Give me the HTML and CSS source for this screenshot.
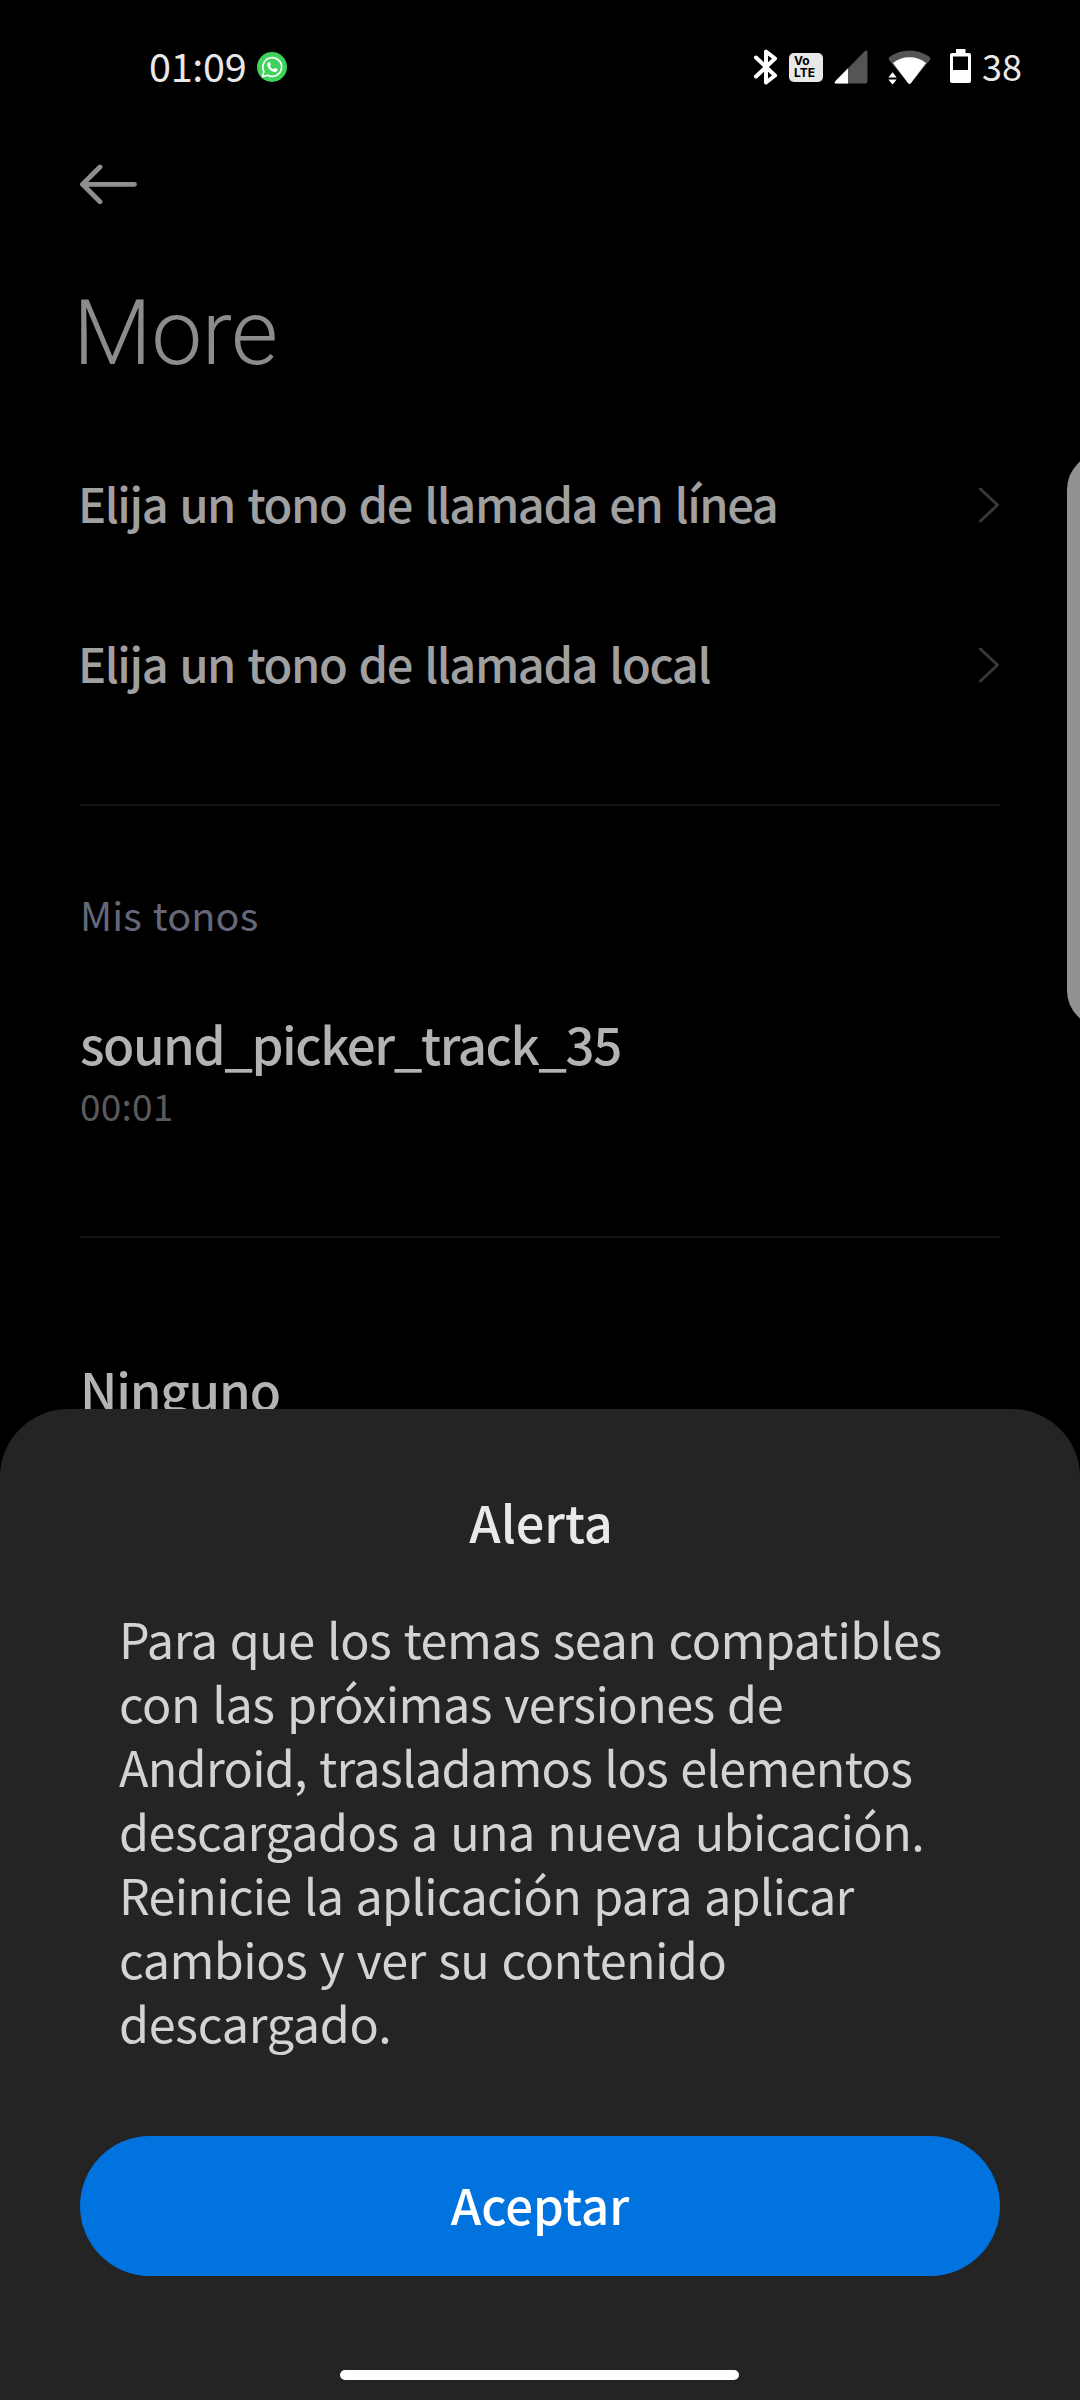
FILE: index.html
```
<!DOCTYPE html>
<html lang="es">
<head>
<meta charset="utf-8">
<title>More</title>
<link rel="stylesheet" href="styles.css">
</head>
<body>
<div class="screen">
  <header class="status">
    <div class="status-left">
      <span class="time">01:09</span>
      <svg class="whatsapp" width="30" height="30" viewBox="0 0 30 30">
        <circle cx="15" cy="15" r="15" fill="#3fd35c"/>
        <path d="M5.500 24.600l1.400-5.200A9.400 9.400 0 1 1 10.600 23.200z" fill="none" stroke="#fff" stroke-width="1.700" stroke-linejoin="round"/>
        <path d="M11.300 10.200c.6-.6 1.300-.5 1.600.1l.9 2c.2.5-.6 1.200-.9 1.600.8 1.600 2 2.700 3.700 3.400.5-.5 1-1.400 1.500-1.200l2.100 1c.5.3.4 1.200 0 1.700-1 1.200-2.600 1.500-4.200.8-2.800-1.100-4.900-3.300-5.600-5.900-.3-1.500.1-2.700.9-3.500z" fill="#fff"/>
      </svg>
    </div>
    <div class="status-right">
      <svg class="bluetooth" width="26" height="38" viewBox="0 0 26 38">
        <path d="M3 9.500L22 27.500L13 34.500V3.500L22 10.500L3 28.500" fill="none" stroke="#fff" stroke-width="4" stroke-linejoin="round" stroke-linecap="round"/>
      </svg>
      <span class="volte"><span class="volte-vo">Vo</span><span class="volte-lte">LTE</span></span>
      <svg class="signal" width="34" height="34" viewBox="0 0 34 34">
        <path d="M1.500 31L30.500 1.500Q33.500 -.5 33.500 2V31.500Q33.500 33.500 31.500 33.500H2Q-.5 33.500 1.500 31z" fill="#555"/>
        <path d="M1.500 31L14 18.300V33.500H2Q-.5 33.500 1.500 31z" fill="#fff"/>
      </svg>
      <svg class="wifi" width="43" height="35" viewBox="0 0 43 35">
        <path d="M1.500 10.500Q-.5 8 2 6.500Q11 .5 21.500 .5T41 6.500Q43.500 8 41.500 10.500L22.800 33.300Q21.500 34.800 20.200 33.300z" fill="#555"/>
        <path d="M5 13Q12 7.300 21.500 7.300T38 13L22.800 33.300Q21.500 34.800 20.200 33.300z" fill="#fff"/>
        <path d="M0 21.500H9V35H0z" fill="#000"/>
        <path d="M4.500 22.300L8.700 27.500H.3zM4.500 34.500L.3 29.500H8.700z" fill="#fff"/>
      </svg>
      <svg class="battery" width="22" height="35" viewBox="0 0 22 35">
        <path d="M6 0H15.500V4H19Q21 4 21 6V32Q21 34 19 34H2Q0 34 0 32V6Q0 4 2 4H6z" fill="#fff"/>
        <path d="M3 7.500H18V21H3z" fill="#000"/>
      </svg>
      <span class="level">38</span>
    </div>
  </header>

  <nav class="toolbar">
    <svg width="58" height="40" viewBox="0 0 58 40">
      <path d="M20 3L2.500 20.300L20 37.700M3 20.300H54.500" fill="none" stroke="#8f8f8f" stroke-width="4.800" stroke-linecap="round" stroke-linejoin="round"/>
    </svg>
  </nav>

  <h1 class="title">More</h1>

  <main>
    <div class="row">
      <span class="row-label">Elija un tono de llamada en línea</span>
      <svg class="chevron" width="21" height="38" viewBox="0 0 21 38"><path d="M1.500 3L18.500 19L1.500 35" fill="none" stroke="#383838" stroke-width="3" stroke-linecap="round" stroke-linejoin="round"/></svg>
    </div>
    <div class="row">
      <span class="row-label">Elija un tono de llamada local</span>
      <svg class="chevron" width="21" height="38" viewBox="0 0 21 38"><path d="M1.500 3L18.500 19L1.500 35" fill="none" stroke="#383838" stroke-width="3" stroke-linecap="round" stroke-linejoin="round"/></svg>
    </div>

    <section class="group">
      <h2 class="group-title">Mis tonos</h2>
      <div class="tone">sound_picker_track_35</div>
      <div class="duration">00:01</div>
    </section>

    <section class="group none-group">
      <div class="tone tone-plain">Ninguno</div>
    </section>
  </main>

  <div class="edge-panel"></div>

  <div class="sheet">
    <h2 class="sheet-title">Alerta</h2>
    <p class="sheet-text"><span>Para que los temas sean compatibles</span><br><span>con las próximas versiones de</span><br><span class="tight">Android, trasladamos los elementos</span><br><span>descargados a una nueva ubicación.</span><br><span class="tight">Reinicie la aplicación para aplicar</span><br><span>cambios y ver su contenido</span><br><span class="loose">descargado.</span></p>
    <button class="accept">Aceptar</button>
    <div class="home-bar"></div>
  </div>
</div>
</body>
</html>
```
FILE: styles.css
```
* { box-sizing: border-box; }

body {
  margin: 0;
  background: #000;
  font-family: "Noto Sans CJK SC", "Noto Sans", sans-serif;
}

h1, h2, p { margin: 0; font-weight: inherit; }
svg { display: block; flex: none; }

.screen {
  position: relative;
  width: 1080px;
  height: 2400px;
  overflow: hidden;
  background: #000;
}

/* Status bar */
.status {
  display: flex;
  justify-content: space-between;
  height: 134px;
  padding: 0 56px 0 149px;
  color: #e8e8e8;
}
.status-left, .status-right { display: flex; align-items: center; }
.time {
  font-size: 39.600px;
  letter-spacing: -0.300px;
  line-height: 60px;
  margin: -5px 11px 0 0;
}
.bluetooth { margin-right: 10px; }
.volte {
  display: flex;
  flex-direction: column;
  width: 34px;
  height: 29px;
  margin-right: 11px;
  padding: 2px 0 0 5px;
  border-radius: 5px;
  background: #e8e8e8;
  color: #000;
  font-family: Inter, sans-serif;
  font-weight: 700;
}
.volte-vo { font-size: 12px; line-height: 12px; }
.volte-lte { font-size: 12px; line-height: 12px; }
.signal { margin-right: 20px; }
.wifi { margin-right: 19px; }
.battery { margin: -1px 10px 0 0; }
.level { width: 42px; font-size: 36px; line-height: 60px; margin-top: -5px; }

/* App bar */
.toolbar { height: 149px; padding: 30px 0 0 80px; }
.title {
  height: 142px;
  padding-left: 73px;
  color: #8c8c8c;
  font-family: Roboto, sans-serif;
  font-size: 91px;
  font-weight: 300;
  line-height: 100px;
  letter-spacing: -0.500px;
}

/* Ringtone list */
.row {
  display: flex;
  align-items: center;
  justify-content: space-between;
  height: 160px;
  padding: 0 80px 0 78px;
}
.row-label {
  margin-top: -5px;
  color: #a0a0a0;
  font-size: 47px;
  font-weight: 500;
  letter-spacing: -1.420px;
  word-spacing: 3px;
  line-height: 70px;
}
.group {
  height: 432px;
  margin: 0 80px;
  padding-top: 78px;
  border-top: 2px solid #141414;
}
.row + .group { margin-top: 59px; }
.none-group { padding-top: 116px; }
.group-title {
  margin-bottom: 64px;
  color: #64687a;
  font-size: 39.600px;
  line-height: 60px;
  letter-spacing: 0.100px;
  word-spacing: 2px;
}
.tone {
  color: #b3b3b3;
  font-size: 51px;
  font-weight: 500;
  line-height: 70px;
  letter-spacing: -1.450px;
}
.tone-plain { letter-spacing: -1.200px; }
.duration {
  margin-top: 4px;
  color: #5a5a5a;
  font-size: 37px;
  line-height: 46px;
  letter-spacing: 0.200px;
}

.edge-panel {
  position: absolute;
  top: 453px;
  right: -60px;
  width: 73px;
  height: 574px;
  border-radius: 42px;
  background: #929292;
}

/* Alert sheet */
.sheet {
  position: absolute;
  inset: 1409px 0 0;
  display: flex;
  flex-direction: column;
  padding: 77px 80px 20px;
  border-radius: 68px 68px 0 0;
  background: #242424;
}
.sheet-title {
  margin-bottom: 50px;
  padding-left: 2px;
  color: #e9e9e9;
  font-size: 50.500px;
  font-weight: 500;
  line-height: 70px;
  text-align: center;
}
.sheet-text {
  margin-bottom: 82px;
  padding-left: 39px;
  color: #d3d3d3;
  font-size: 48.500px;
  line-height: 64px;
  letter-spacing: -0.520px;
  word-spacing: 2px;
  white-space: nowrap;
}
.sheet-text .tight { letter-spacing: -0.730px; }
.sheet-text .loose { letter-spacing: -0.300px; }
.accept {
  height: 140px;
  padding: 0 0 4px;
  border: 0;
  border-radius: 70px;
  background: #0073de;
  color: #fff;
  font: 500 49px/70px "Noto Sans CJK SC", "Noto Sans", sans-serif;
}
.home-bar {
  width: 399px;
  height: 10px;
  margin: auto 0 0 260px;
  border-radius: 5px;
  background: #fff;
}
```
